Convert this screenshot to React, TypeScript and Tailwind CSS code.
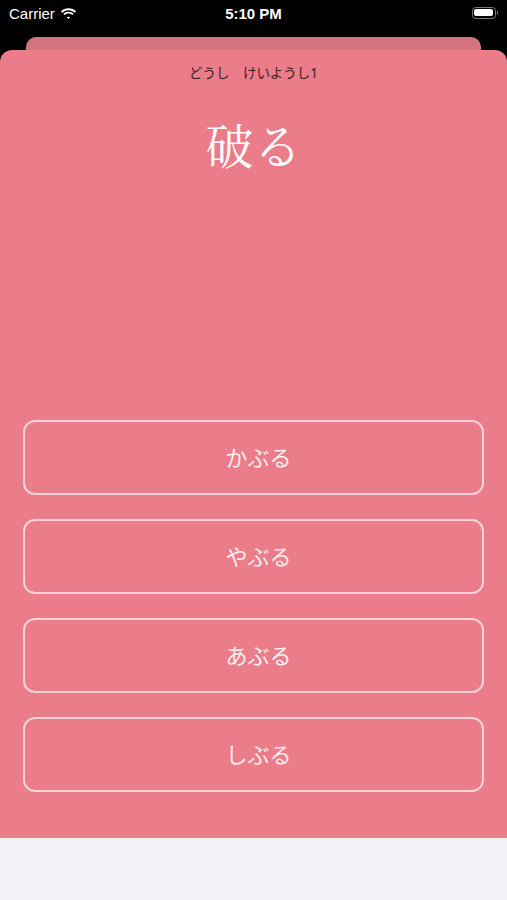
const answers = ['かぶる', 'やぶる', 'あぶる', 'しぶる'];

function StatusBar() {
  return (
    <div className="relative flex h-[37px] items-center justify-between px-[9px] text-white [font-family:'Liberation_Sans',Arial,sans-serif]">
      <div className="flex items-center gap-[5px] pb-[12px] pt-[2px]">
        <span className="text-[15px] leading-none">Carrier</span>
        <svg width="17" height="12" viewBox="0 0 17 12" fill="white">
          <path d="M8.5 2.2c2.4 0 4.6.9 6.3 2.5l1.3-1.3C14.1 1.4 11.4.3 8.5.3S2.9 1.4.9 3.4l1.3 1.3C3.9 3.1 6.1 2.2 8.5 2.2z" />
          <path d="M8.5 5.6c1.5 0 2.8.6 3.9 1.5l1.3-1.3C12.3 4.5 10.5 3.7 8.5 3.7S4.7 4.5 3.3 5.8l1.3 1.3c1.1-.9 2.4-1.5 3.9-1.5z" />
          <path d="M8.5 8.8c.6 0 1.2.2 1.6.6L8.5 11 6.9 9.4c.4-.4 1-.6 1.6-.6z" />
        </svg>
      </div>
      <span className="absolute left-1/2 top-[6px] -translate-x-1/2 text-[15px] font-semibold leading-none">5:10 PM</span>
      <div className="flex items-center pb-[12px] pl-[2px]">
        <div className="flex h-[12px] w-[24px] items-center rounded-[3.5px] border border-[#7a7a7a] p-[1.5px]">
          <div className="h-full w-full rounded-[2px] bg-white" />
        </div>
        <div className="ml-[1px] h-[4px] w-[1.5px] rounded-r-sm bg-[#7a7a7a]" />
      </div>
    </div>
  );
}

export default function App() {
  return (
    <div className="flex h-[900px] w-full flex-col bg-black [font-family:'Noto_Sans_CJK_JP',sans-serif]">
      <StatusBar />
      <div className="mx-[26px] h-[13px] rounded-t-[10px] bg-[#d3747f]" />
      <div className="flex h-[788px] flex-col items-center rounded-t-[12px] bg-[#eb7c89]">
        <p className="pt-[14px] text-[13.5px] leading-[18px] text-[#3a2125] [font-family:'Noto_Sans','Noto_Sans_CJK_JP',sans-serif]">
          どうし　けいようし1
        </p>
        <h1 className="mt-[34px] text-[48px] leading-[56px] text-white [font-family:'Noto_Serif_CJK_JP','Liberation_Serif','Noto_Sans_CJK_JP',serif]">
          破る
        </h1>
        <div className="mt-[248px] flex w-full flex-col gap-6 px-[23px]">
          {answers.map((a) => (
            <button
              key={a}
              className="flex h-[75px] w-full items-center justify-center rounded-[12px] border-2 border-[#fcd3d9] pb-[2px] pl-[10px] text-[22px] text-[#fdeef0]"
            >
              {a}
            </button>
          ))}
        </div>
      </div>
      <div className="flex-1 bg-[#f1f1f6]" />
    </div>
  );
}
